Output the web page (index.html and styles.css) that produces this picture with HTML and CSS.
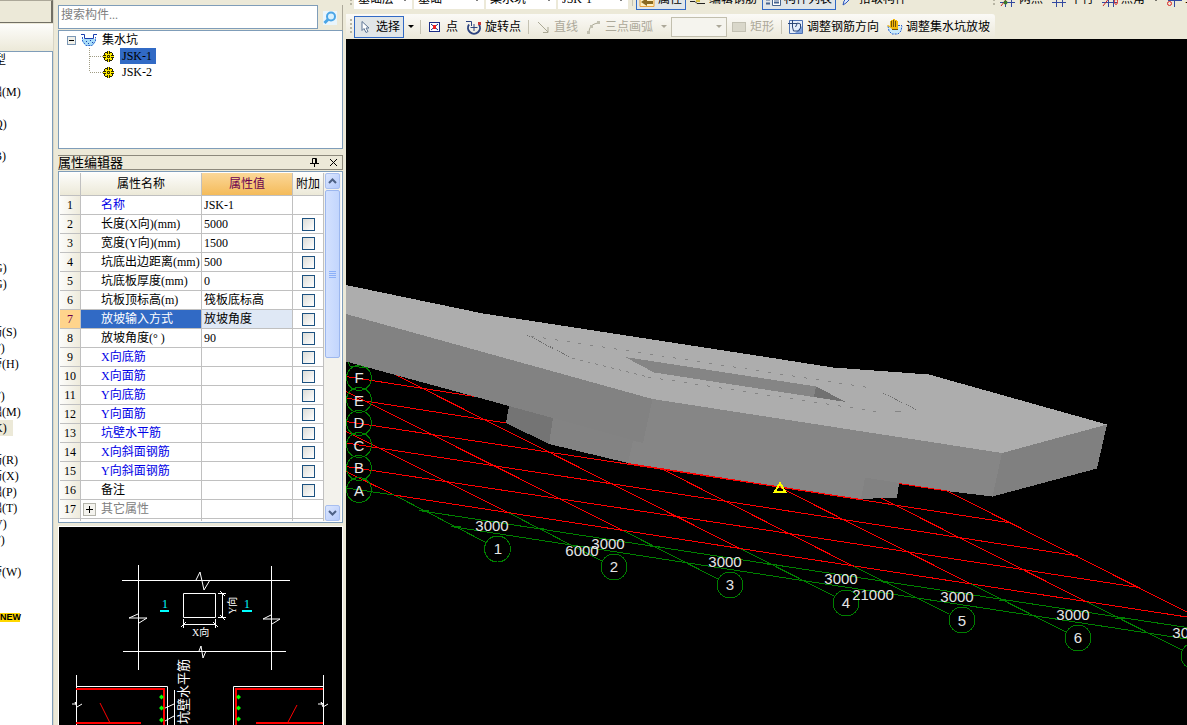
FILE: index.html
```
<!DOCTYPE html>
<html lang="zh-CN">
<head>
  <meta charset="UTF-8" />
  <meta name="viewport" content="width=device-width, initial-scale=1.0"/>
  <title>集水坑</title>
  <link rel="stylesheet" href="styles.css">
</head>
<body>
  <nav class="modules">
    <div class="modules-head"></div>
    <div class="modules-bar"></div>
    <ul class="modules-list">
      <li class="group">型</li>
      <li></li>
      <li>础(M)</li>
      <li></li>
      <li>(Q)</li>
      <li></li>
      <li>(B)</li>
      <li></li>
      <li></li>
      <li></li>
      <li></li>
      <li></li>
      <li></li>
      <li>(G)</li>
      <li>(G)</li>
      <li></li>
      <li></li>
      <li>筋(S)</li>
      <li>(F)</li>
      <li>带(H)</li>
      <li></li>
      <li>(F)</li>
      <li>础(M)</li>
      <li><span class="current">(K)</span></li>
      <li></li>
      <li>筋(R)</li>
      <li>筋(X)</li>
      <li>础(P)</li>
      <li>础(T)</li>
      <li>(V)</li>
      <li>(F)</li>
      <li></li>
      <li>带(W)</li>
    </ul>
    <span class="new-tag">NEW</span>
  </nav>

  <aside class="panel">
    <div class="search">
      <input type="text" class="search-input" placeholder="搜索构件..." aria-label="搜索构件" />
      <button class="search-btn" aria-label="搜索">
        <svg width="14" height="14" viewBox="0 0 14 14"><rect width="14" height="14" fill="#e9f5fc"/><circle cx="8" cy="5.500" r="4" fill="#d8f0fd" stroke="#4aa5e6" stroke-width="2"/><path d="M5 8.500L1.500 12" stroke="#4aa5e6" stroke-width="3"/></svg>
      </button>
    </div>

    <div class="tree">
      <div class="tree-row root">
        <button class="toggle" aria-label="折叠"><svg width="9" height="9" viewBox="0 0 9 9"><rect x=".5" y=".5" width="8" height="8" fill="#f0efe8" stroke="#7b97b5"/><path d="M2 4.500h5" stroke="#000"/></svg></button>
        <svg width="16" height="14" viewBox="0 0 16 14"><path d="M1 6h14l-1 4-3 3H5L2 10z" fill="#a8dcf8"/><path d="M0 1.500h3.500v4h9v-4H16" fill="none" stroke="#1a3fae"/><path d="M1.500 4v4L5 12.500h6L14.500 8V4" fill="none" stroke="#2a62d0" stroke-dasharray="2 1"/><path d="M5 8.500h1M9 7.500h1M7 10.500h1M11 9.500h1" stroke="#1a3fae"/></svg>
        <span>集水坑</span>
      </div>
      <div class="tree-row child">
        <svg width="14" height="16" viewBox="0 0 14 16"><path d="M.5 0v16M1 8.500h13" stroke="#a09c84" stroke-dasharray="1 1" fill="none"/></svg>
        <svg class="gear" width="11" height="11" viewBox="0 0 11 11"><path d="M4 0h3v1h2v1h1v2h1v3h-1v2H9v1H7v1H4v-1H2V9H1V7H0V4h1V2h1V1h2z" fill="#2a2600"/><path d="M5 0h1v11H5zM0 5h11v1H0zM2 2h2v2H2zM7 2h2v2H7zM2 7h2v2H2zM7 7h2v2H7zM3 3h5v5H3z" fill="#ffec00"/><path d="M4.500 4.500h2v2h-2z" fill="#ffec00" stroke="#2a2600"/></svg>
        <span class="selected">JSK-1</span>
      </div>
      <div class="tree-row child">
        <svg width="14" height="16" viewBox="0 0 14 16"><path d="M.5 0v8M1 8.500h13" stroke="#a09c84" stroke-dasharray="1 1" fill="none"/></svg>
        <svg class="gear" width="11" height="11" viewBox="0 0 11 11"><path d="M4 0h3v1h2v1h1v2h1v3h-1v2H9v1H7v1H4v-1H2V9H1V7H0V4h1V2h1V1h2z" fill="#2a2600"/><path d="M5 0h1v11H5zM0 5h11v1H0zM2 2h2v2H2zM7 2h2v2H7zM2 7h2v2H2zM7 7h2v2H7zM3 3h5v5H3z" fill="#ffec00"/><path d="M4.500 4.500h2v2h-2z" fill="#ffec00" stroke="#2a2600"/></svg>
        <span class="leaf">JSK-2</span>
      </div>
    </div>

    <div class="dock-title">
      <h2>属性编辑器</h2>
      <button class="dock-btn" aria-label="固定"><svg width="9" height="9" viewBox="0 0 9 9"><path d="M2.500 5V.5h4V5M5.500 0v5M0 5.500h9M4.500 6v3" fill="none" stroke="#000"/></svg></button>
      <button class="dock-btn" aria-label="关闭"><svg width="9" height="9" viewBox="0 0 9 9"><path d="M1 1l7 7M8 1L1 8" stroke="#000"/></svg></button>
    </div>

    <div class="props">
      <table>
        <colgroup><col class="c-no"><col class="c-name"><col class="c-value"><col class="c-extra"></colgroup>
        <thead>
          <tr><th></th><th>属性名称</th><th class="hot">属性值</th><th>附加</th></tr>
        </thead>
        <tbody>
          <tr><th>1</th><td class="name key">名称</td><td>JSK-1</td><td></td></tr>
          <tr><th>2</th><td class="name">长度(X向)(mm)</td><td>5000</td><td><input type="checkbox" aria-label="附加 长度"></td></tr>
          <tr><th>3</th><td class="name">宽度(Y向)(mm)</td><td>1500</td><td><input type="checkbox" aria-label="附加 宽度"></td></tr>
          <tr><th>4</th><td class="name">坑底出边距离(mm)</td><td>500</td><td><input type="checkbox" aria-label="附加 坑底出边距离"></td></tr>
          <tr><th>5</th><td class="name">坑底板厚度(mm)</td><td>0</td><td><input type="checkbox" aria-label="附加 坑底板厚度"></td></tr>
          <tr><th>6</th><td class="name">坑板顶标高(m)</td><td>筏板底标高</td><td><input type="checkbox" aria-label="附加 坑板顶标高"></td></tr>
          <tr class="active"><th>7</th><td class="name">放坡输入方式</td><td class="val">放坡角度</td><td><input type="checkbox" aria-label="附加 放坡输入方式"></td></tr>
          <tr><th>8</th><td class="name">放坡角度(° )</td><td>90</td><td><input type="checkbox" aria-label="附加 放坡角度"></td></tr>
          <tr><th>9</th><td class="name key">X向底筋</td><td></td><td><input type="checkbox" aria-label="附加 X向底筋"></td></tr>
          <tr><th>10</th><td class="name key">X向面筋</td><td></td><td><input type="checkbox" aria-label="附加 X向面筋"></td></tr>
          <tr><th>11</th><td class="name key">Y向底筋</td><td></td><td><input type="checkbox" aria-label="附加 Y向底筋"></td></tr>
          <tr><th>12</th><td class="name key">Y向面筋</td><td></td><td><input type="checkbox" aria-label="附加 Y向面筋"></td></tr>
          <tr><th>13</th><td class="name key">坑壁水平筋</td><td></td><td><input type="checkbox" aria-label="附加 坑壁水平筋"></td></tr>
          <tr><th>14</th><td class="name key">X向斜面钢筋</td><td></td><td><input type="checkbox" aria-label="附加 X向斜面钢筋"></td></tr>
          <tr><th>15</th><td class="name key">Y向斜面钢筋</td><td></td><td><input type="checkbox" aria-label="附加 Y向斜面钢筋"></td></tr>
          <tr><th>16</th><td class="name">备注</td><td></td><td><input type="checkbox" aria-label="附加 备注"></td></tr>
          <tr><th>17</th><td class="more"><div class="more-cell"><button class="expand" aria-label="展开"><svg width="13" height="13" viewBox="0 0 13 13"><rect x=".5" y=".5" width="12" height="12" fill="#f4f3ee" stroke="#b5b5ac"/><path d="M3 6.500h7M6.500 3v7" stroke="#000"/></svg></button>其它属性</div></td><td></td><td></td></tr>
          <tr class="tail"><td></td><td></td><td></td><td></td></tr>
        </tbody>
      </table>
      <div class="scroll">
        <button class="scroll-btn" aria-label="向上"><svg width="9" height="6" viewBox="0 0 9 6"><path d="M1 5l3.500-3.500L8 5" fill="none" stroke="#4d6185" stroke-width="2"/></svg></button>
        <div class="thumb"><i></i><i></i><i></i><i></i></div>
        <div class="track"></div>
        <button class="scroll-btn" aria-label="向下"><svg width="9" height="6" viewBox="0 0 9 6"><path d="M1 1l3.500 3.500L8 1" fill="none" stroke="#4d6185" stroke-width="2"/></svg></button>
      </div>
    </div>

    <div class="preview">
      <svg viewBox="59 527 283 198" preserveAspectRatio="xMinYMin slice">
        <g class="thin white">
          <path d="M122 580.500h168M123 651.500h163M138.500 565v105M271.500 566v104"/>
          <path d="M196 580l4-8 4 18 6-10M199 651l2-5 2 12 3-7M138 614l-9 4h18l-8 5M271 615l-8 4h17l-8 5"/>
          <path d="M183.500 593.500h32v24h-32z"/>
          <path d="M222.500 593v24M218 593.500h8M218 617.500h8M220 591l5 5M220 615l5 5"/>
          <path d="M183 624.500h32M183.500 619v9M215.500 619v9M181 627l5-5M213 622l5 5"/>
          <path d="M76.500 675v50M76 686.500h91.500V725M323.500 675v50M323 686.500h-89.500V725"/>
          <path d="M72 704h5l-2-2 2 5 5-3M318 704h5l-2-2 2 5 5-3"/>
          <path d="M174.500 690v35M163 709l11-5M165 721l9-5"/>
        </g>
        <g class="thick red">
          <path d="M76 689h88V725M76 723h65M323 689h-87V725M323 723h-67"/>
          <path class="slim" d="M100 703l10 20M297 705l-10 19"/>
        </g>
        <path class="dots" d="M161.500 694.500l2.500 2.500-2.500 2.500-2.500-2.500zM161.500 705.500l2.500 2.500-2.500 2.500-2.500-2.500zM161.500 717.500l2.500 2.500-2.500 2.500-2.500-2.500zM238.500 694.500l2.500 2.500-2.500 2.500-2.500-2.500zM238.500 705.500l2.500 2.500-2.500 2.500-2.500-2.500zM238.500 716.500l2.500 2.500-2.500 2.500-2.500-2.500z"/>
        <path class="cyan-line" d="M160 611h9M242 611h10"/>
        <g class="cyan"><text x="162" y="608">1</text><text x="244" y="608">1</text></g>
        <text class="dim" x="192" y="636">X向</text>
        <text class="dim" transform="translate(236 614) rotate(-90)">Y向</text>
        <text class="note" transform="translate(188 724) rotate(-90)">坑壁水平筋</text>
      </svg>
    </div>
  </aside>

  <main class="work">
    <div class="toolbars">
      <div class="toolbar top">
        <span class="grip"></span>
        <label class="combo w-floor"><select aria-label="楼层"><option>基础层</option></select><span class="arrow"></span></label>
        <label class="combo"><select aria-label="类别"><option>基础</option></select><span class="arrow"></span></label>
        <label class="combo"><select aria-label="构件类型"><option>集水坑</option></select><span class="arrow"></span></label>
        <label class="combo"><select aria-label="构件"><option>JSK-1</option></select><span class="arrow"></span></label>
        <span class="sep"></span>
        <button class="tool on"><svg width="16" height="16" viewBox="0 0 16 16"><path d="M1 0v15.500h14V0" fill="#fff0c0" stroke="#e8a33b"/><path d="M2 11l6-4v3h6v3H8v2z" fill="#8a6a20"/></svg>属性</button>
        <button class="tool"><svg width="16" height="16" viewBox="0 0 16 16"><path d="M0 10.500h5l2 2h8M2 8h13" stroke="#222" fill="none"/><path d="M6 8h4v3H6z" fill="#d8c040"/></svg>编辑钢筋</button>
        <button class="tool on"><svg width="16" height="16" viewBox="0 0 16 16"><path d="M7.500 1.500h8v13h-8z" fill="#fff" stroke="#46648f"/><path d="M9 8.500h5M9 11.500h5M1 8.500h4M1 12.500h4" stroke="#46648f" stroke-width="2"/></svg>构件列表</button>
        <button class="tool"><svg width="16" height="16" viewBox="0 0 16 16"><path d="M3 14l1-4 7-7 2 2-7 7z" fill="#dce9ff" stroke="#2c55b8"/></svg>拾取构件</button>
        <span class="spring"></span>
        <span class="grip"></span>
        <button class="tool"><svg width="16" height="16" viewBox="0 0 16 16"><path d="M0 11.500h15M5.500 2v14M11.500 2v14" stroke="#3349a0"/><path d="M1 15l7-9" stroke="#c22"/><circle cx="5.500" cy="11.500" r="2" fill="#3e7a2c"/></svg>两点</button>
        <button class="tool"><svg width="16" height="16" viewBox="0 0 16 16"><path d="M1 11.500h14M5.500 2v14M11.500 2v14" stroke="#3349a0"/></svg>平行</button>
        <button class="tool"><svg width="16" height="16" viewBox="0 0 16 16"><path d="M0 11.500h15M6.500 2v14M11.500 2v14" stroke="#3349a0"/><path d="M1 15l7-9" stroke="#c22"/><ellipse cx="14" cy="10.500" rx="1.500" ry="3" fill="none" stroke="#d22"/></svg>点角</button>
        <span class="drop"><span class="arrow"></span></span>
        <button class="tool"><svg width="16" height="16" viewBox="0 0 16 16"><path d="M2 9.500h14M8.500 9v7" stroke="#3349a0"/><circle cx="3.500" cy="12.500" r="2" fill="none" stroke="#d22"/></svg>三</button>
      </div>
      <div class="toolbar draw">
        <span class="grip"></span>
        <button class="tool on"><svg width="16" height="16" viewBox="0 0 16 16"><path d="M5 2.500v9l2-2 2 4 2-1-2-3.500h3z" fill="#fff" stroke="#5c7594"/></svg>选择</button>
        <span class="drop"><span class="arrow"></span></span>
        <span class="sep"></span>
        <button class="tool"><svg width="16" height="16" viewBox="0 0 16 16"><rect x="2.500" y="3.500" width="10" height="9" fill="#fff" stroke="#1b2c86"/><path d="M4 5l7 6M11 5l-7 6" stroke="#1b2c86"/><path d="M6 6h3v4H6z" fill="#e22"/></svg>点</button>
        <button class="tool"><svg width="16" height="16" viewBox="0 0 16 16"><path d="M3 5.500a6 6 0 1 0 10 0" fill="none" stroke="#2d4480" stroke-width="2"/><path d="M0 2.500h5.500V7M8 5v7M4.500 8.500h7" fill="none" stroke="#2d4480"/><path d="M12 3h3v3h-3z" fill="#c33"/></svg>旋转点</button>
        <span class="sep"></span>
        <button class="tool" disabled><svg width="16" height="16" viewBox="0 0 16 16"><path d="M3 3l10 10M13 8v5.500H8" fill="none" stroke="#aaa894"/></svg>直线</button>
        <button class="tool" disabled><svg width="16" height="16" viewBox="0 0 16 16"><path d="M3 14c0-6 3-9 9-10" fill="none" stroke="#aaa894"/><path d="M1 12h3v3H1zM4 6h3v3H4zM11 2h3v3h-3z" fill="#c2c0b0"/></svg>三点画弧</button>
        <span class="drop off"><span class="arrow"></span></span>
        <label class="combo off"><select aria-label="画弧方式" disabled><option></option></select><span class="arrow"></span></label>
        <button class="tool" disabled><svg width="16" height="16" viewBox="0 0 16 16"><rect x="1.500" y="3.500" width="13" height="9" fill="#d9d7ca" stroke="#c2c0b2"/></svg>矩形</button>
        <span class="sep"></span>
        <button class="tool"><svg width="16" height="16" viewBox="0 0 16 16"><path d="M1.500 1.500h13v13h-13z" fill="#e6eefa" stroke="#4d71b4"/><path d="M7 14L14 7v7z" fill="#7fa2dc"/><path d="M0 4.500h9M4.500 1v7l1 4h5l2-3V5l-3-1-2 4" fill="none" stroke="#2b4676"/></svg>调整钢筋方向</button>
        <button class="tool"><svg width="16" height="16" viewBox="0 0 16 16"><path d="M1 8h14l-1 4-3 3H5l-3-3z" fill="#c8e9fb"/><path d="M1 7l1 5 3 3h6l3-3 1-5M11 6.500h4" fill="none" stroke="#2a62d0" stroke-dasharray="2 1"/><path d="M3 2h1V1h2V0h2v1h2v1h1v8H5L0 6.500 1 6l2 1z" fill="#f2b90c"/><path d="M4.500 2v6M6.500 1v7M8.500 2v6M5 10.500h6" stroke="#70500a"/></svg>调整集水坑放坡</button>
      </div>
    </div>

    <div class="scene">
      <svg viewBox="346 39 841 686" preserveAspectRatio="xMinYMin slice">
        <g class="axis">
          <path d="M346 376.500L475 396.500M346 398L506 423M346 421.500L766 485L1011 523M346 443L766 507.500L1078 556M346 466.500L766 530L1139 587.500M394 495L766 552.500L1187 617"/>
          <path d="M346 471.500L396 496M346 431.500L509 513M346 391.500L624 531M392 373L741 549M664 470L854 566.500M779 487L971 584M881 498L1087 602M947 491L1187 612"/>
        </g>
        <g class="dimension">
          <path d="M346 488L394 495M419 510.500L766 563.500L1187 627.500M451 526.500L766 575L1187 639"/>
          <path d="M396 496L486 542.500M509 513L602 561M624 531L718 579M741 549L834 596M854 566.500L949 614M971 584L1066 632M1087 602L1182 650"/>
          <path d="M419 510h10M451 526h10M534 528h10M650 546h10M767 564h10M883 582h10M999 600h10M1115 618h10"/>
          <path d="M348 362l2 4 9 1 10 0"/>
          <circle cx="359" cy="378" r="12.500"/><circle cx="359" cy="400" r="12.500"/><circle cx="359" cy="423" r="12.500"/>
          <circle cx="359" cy="445" r="12.500"/><circle cx="359" cy="468" r="12.500"/><circle cx="359" cy="490" r="12.500"/>
          <circle cx="497.500" cy="549" r="13"/><circle cx="614" cy="567" r="13"/><circle cx="730" cy="585" r="13"/>
          <circle cx="846" cy="603" r="13"/><circle cx="962" cy="620" r="13"/><circle cx="1078" cy="638" r="13"/><circle cx="1194" cy="656" r="13"/>
        </g>

        <g class="slab">
          <path fill="#adadad" d="M346 285L483 313.500L766 357L833 367.500L929 374.500L1107 424.500L1002 453L652.500 399L346 314z"/>
          <path fill="#828282" d="M346 314L652.500 399L643 443L553 418L509 406L346 361.500z"/>
          <path fill="#868686" d="M652.500 399L1002 453L992.500 496.500L946 491L899 483L897 497.500L861 499L628 463L633 441L643 443z"/>
          <path fill="#838383" d="M553 418L643 443L633 441L628 463L549 444z"/>
          <path fill="#747474" d="M509 406L553 418L549 444L506 423z"/>
          <path fill="#828282" d="M865 477.500L899 483L897 497.500L861 499z"/>
          <path fill="#808080" d="M1002 453L1107 424.500L1097 468.500L992.500 496.500z"/>
          <path fill="#858585" d="M625 357L816 386.500L846 402L654 372.500z"/>
          <path fill="#717171" d="M816 386.500L846 402L814 397z"/>
        </g>
        <g class="hidden-edge">
          <path stroke-dasharray="3 9" d="M531 336L872 388M648 377L880 412"/>
          <path stroke-dasharray="3 5" d="M572 358L648 377"/>
          <path class="dark" stroke-dasharray="1 1" d="M527 335L570 357M883 393L917 410"/>
          <path d="M895 411.500h6"/>
        </g>
        <path class="axis" d="M628 463.500L861 499.500M899 483.500L947 491"/>
        <path class="origin" d="M780 483l-5 8.500h10z"/>

        <g class="labels">
          <text x="359" y="383">F</text><text x="359" y="406">E</text><text x="359" y="428">D</text>
          <text x="359" y="451">C</text><text x="359" y="473">B</text><text x="359" y="496">A</text>
          <text x="498" y="554">1</text><text x="614" y="572">2</text><text x="730" y="590">3</text>
          <text x="846" y="608">4</text><text x="962" y="626">5</text><text x="1078" y="643">6</text>
          <text x="492" y="531">3000</text><text x="608" y="549">3000</text><text x="725" y="567">3000</text>
          <text x="841" y="584">3000</text><text x="957" y="602">3000</text><text x="1073" y="620">3000</text><text x="1189" y="638">3000</text>
          <text x="582" y="556">6000</text><text x="873" y="600">21000</text>
        </g>
      </svg>
    </div>
  </main>
</body>
</html>
```
FILE: styles.css
```
* {
  box-sizing: border-box;
}
body {
  margin: 0;
  height: 100vh;
  display: flex;
  overflow: hidden;
  background: #ece9d8;
  color: #000;
  font-family: "Liberation Serif", "Noto Sans CJK SC", serif;
  font-size: 12px;
  line-height: 16px;
}
button, input, select {
  font: inherit;
  color: inherit;
  margin: 0;
  padding: 0;
  border: none;
  border-radius: 0;
  background: none;
}
svg {
  display: block;
  flex: none;
}

/* module list */
.modules {
  width: 54px;
  flex: none;
  display: flex;
  flex-direction: column;
  overflow: hidden;
  border-right: 1px solid #d8d5c6;
}
.modules-head {
  height: 23px;
  border-right: 2px solid #716f64;
  border-bottom: 1px solid #716f64;
  border-top: 1px solid #aca899;
}
.modules-bar {
  height: 28px;
  margin-top: 1px;
  background: linear-gradient(#fdfdfb, #ece9d8);
  border-bottom: 1px solid #7f9db9;
}
.modules-list {
  list-style: none;
  margin: 0;
  padding: 0;
  background: #fff;
  border-right: 1px solid #7f9db9;
}
.modules-list li {
  height: 16px;
  margin-left: -10px;
  white-space: nowrap;
}
.modules-list .group {
  margin-left: -6px;
}
.current {
  display: inline-block;
  width: 23px;
  background: #ece9d8;
}
.new-tag {
  flex: 1;
  padding-top: 32px;
  border-right: 1px solid #7f9db9;
  background: linear-gradient(#ffd800, #ffd800) 0 33px / 20px 9px no-repeat #fff;
  font: bold 9px/10px "Liberation Sans", sans-serif;
}

/* component panel */
.panel {
  width: 292px;
  flex: none;
  display: flex;
  flex-direction: column;
  padding: 5px 3px 0 4px;
}
.search {
  display: flex;
  height: 25px;
  border-right: 1px solid #aca899;
}
.search-input {
  flex: 1;
  min-width: 0;
  height: 24px;
  padding: 0 2px 3px;
  border: 1px solid #7f9db9;
  background: #fff;
}
.search-input::placeholder {
  color: #808080;
  opacity: 1;
}
.search-btn {
  width: 24px;
  display: flex;
  align-items: center;
  justify-content: center;
}
.tree {
  height: 119px;
  padding: 1px 8px;
  background: #fff;
  border: 1px solid #7f9db9;
}
.tree-row {
  display: flex;
  align-items: center;
  height: 16px;
}
.root {
  gap: 5px;
}
.child {
  padding-left: 22px;
}
.gear {
  margin-right: 6px;
}
.selected, .leaf {
  padding: 0 4px 0 2px;
}
.selected {
  background: #316ac5;
}
.dock-title {
  display: flex;
  align-items: center;
  gap: 10px;
  height: 15px;
  margin-top: 6px;
  padding-right: 4px;
  border: 1px solid #8c897c;
  border-left: none;
}
.dock-title h2 {
  flex: 1;
  margin: 0;
  font-size: 13px;
  font-weight: normal;
  line-height: 13px;
}
.props {
  display: flex;
  margin-top: 1px;
  padding: 1px;
  background: #fff;
  border: 1px solid #7f9db9;
}
table {
  flex: 1;
  table-layout: fixed;
  border-spacing: 0;
  width: 264px;
}
.c-no { width: 21px; }
.c-name { width: 121px; }
.c-value { width: 91px; }
.c-extra { width: 31px; }
th, td {
  height: 19px;
  padding: 0 0 0 2px;
  border-right: 1px solid #c0c0c0;
  border-bottom: 1px solid #c0c0c0;
  font-weight: normal;
  line-height: 18px;
  white-space: nowrap;
  text-align: left;
}
td:last-child {
  padding: 0;
}
th {
  padding: 0;
  text-align: center;
  background: linear-gradient(#fdfdfb, #ece9d8);
}
tbody th {
  background: linear-gradient(90deg, #fcfcfa, #eeebdc);
}
thead th {
  height: 23px;
}
.hot {
  color: #6b0050;
  background: linear-gradient(#fbd798, #f4bb5a);
}
.name {
  padding-left: 20px;
}
.key {
  color: #0000e6;
}
.active th {
  color: #6b0050;
  background: #ffd48c;
}
.active .name {
  color: #fff;
  background: #316ac5;
}
.active .val {
  background: #dfe8f5;
}
.more-cell {
  display: flex;
  align-items: center;
  gap: 5px;
  color: #808080;
}
.tail td {
  height: 2px;
  line-height: 0;
  border-bottom: none;
}
input[type="checkbox"] {
  appearance: none;
  display: block;
  width: 13px;
  height: 13px;
  margin: 0 auto;
  border: 1px solid #1c5180;
  background: linear-gradient(135deg, #dcdcd7, #fff);
}
.scroll {
  flex: 1;
  display: flex;
  flex-direction: column;
  background: #f3f2ec;
  padding: 0 1px;
}
.scroll-btn {
  height: 16px;
  display: flex;
  align-items: center;
  justify-content: center;
  border: 1px solid #a8bff0;
  border-radius: 2px;
  background: linear-gradient(135deg, #dce7fe, #b5cafb);
}
.thumb {
  height: 168px;
  margin-top: 1px;
  display: flex;
  flex-direction: column;
  align-items: center;
  justify-content: center;
  gap: 1px;
  border: 1px solid #9cb7ee;
  border-radius: 2px;
  background: linear-gradient(90deg, #d3e1fe, #c3d6fd);
}
.thumb i {
  width: 7px;
  height: 1px;
  background: #8cb0f8;
}
.track {
  flex: 1;
}
.preview {
  flex: 1;
  min-height: 0;
  margin-top: 3px;
  background: #000;
  border: 1px solid #fff;
  border-bottom: none;
}
.preview svg, .scene svg {
  width: 100%;
  height: 100%;
}
.thin {
  fill: none;
  stroke: #fff;
}
.thick {
  fill: none;
  stroke: #f00;
  stroke-width: 2;
}
.slim {
  stroke-width: 1;
}
.dots {
  fill: #0f0;
}
.cyan-line {
  stroke: #0ff;
  stroke-width: 2;
}
.cyan {
  fill: #0ff;
}
.dim {
  fill: #fff;
  font-size: 10px;
}
.note {
  fill: #fff;
  font-size: 13px;
}

/* toolbars and model view */
.work {
  flex: 1;
  min-width: 0;
  display: flex;
  flex-direction: column;
}
.toolbars {
  overflow: hidden;
}
.toolbar {
  display: flex;
  align-items: center;
  gap: 1px;
  height: 24px;
  padding-left: 4px;
  white-space: nowrap;
}
.top {
  margin-top: -13px;
  margin-bottom: 3px;
}
.draw {
  width: max-content;
  height: 25px;
  padding-right: 1px;
  border-radius: 0 3px 3px 0;
  background: linear-gradient(#fbfaf7, #ebe8d9);
}
.grip {
  width: 2px;
  height: 16px;
  margin-right: 1px;
  flex: none;
  background: repeating-linear-gradient(#b8b5a4 0 2px, transparent 2px 4px);
}
.sep {
  width: 1px;
  height: 14px;
  margin: 0 2px;
  flex: none;
  background: #c5c2b2;
}
.tool {
  display: flex;
  align-items: center;
  gap: 3px;
  height: 22px;
  padding: 0 3px 0 2px;
  border: 1px solid transparent;
  flex: none;
}
.tool.on {
  border-color: #316ac5;
  background: #e1e6e8;
}
.tool:disabled {
  color: #aca899;
}
.arrow {
  border: 3px solid transparent;
  border-top-color: #000;
  border-bottom: none;
}
.drop {
  width: 12px;
  display: flex;
  flex: none;
  justify-content: center;
}
.off .arrow {
  border-top-color: #aca899;
}
.combo {
  display: flex;
  align-items: center;
  flex: none;
  width: 70px;
  height: 20px;
  padding: 0 4px;
  background: #fff;
}
.combo select {
  appearance: none;
  flex: 1;
  min-width: 0;
}
.w-floor {
  width: 58px;
}
.top .combo {
  margin-right: 1px;
}
.combo.off {
  width: 56px;
  border: 1px solid #c2bfae;
  background: #f5f4ee;
}
.spring {
  flex: none;
  width: 80px;
}
.scene {
  flex: 1;
  min-height: 0;
  background: #000;
}
.axis, .dimension, .hidden-edge, .origin, .slab {
  shape-rendering: crispEdges;
}
.axis {
  fill: none;
  stroke: #f00;
}
.dimension {
  fill: none;
  stroke: #008000;
}
.hidden-edge {
  fill: none;
  stroke: #858585;
}
.dark {
  stroke: #6c6c6c;
}
.origin {
  fill: none;
  stroke: #ff0;
  stroke-width: 2;
}
.labels {
  fill: #e6e6e6;
  font-family: "Liberation Sans", sans-serif;
  font-size: 15px;
  text-anchor: middle;
}
```
